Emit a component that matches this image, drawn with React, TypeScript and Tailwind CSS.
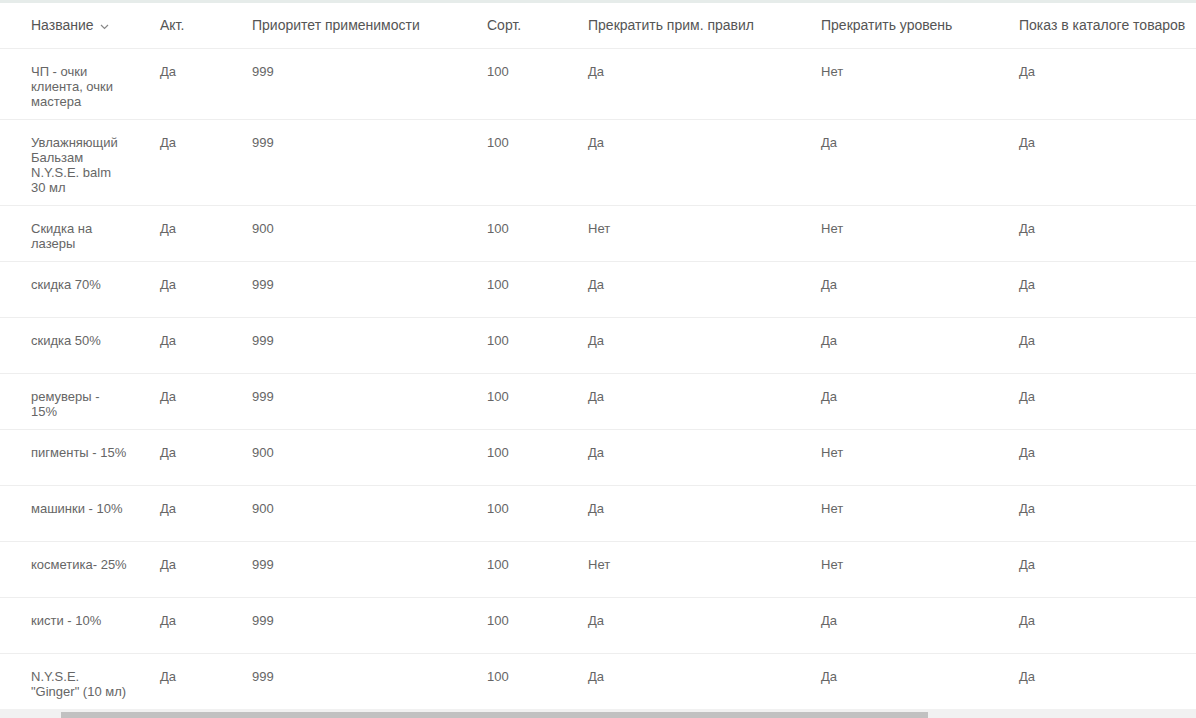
import React from "react";

type Row = { name: string[]; act: string; prio: string; sort: string; stopRule: string; stopLevel: string; catalog: string };

const rows: Row[] = [
  { name: ["ЧП - очки", "клиента, очки", "мастера"], act: "Да", prio: "999", sort: "100", stopRule: "Да", stopLevel: "Нет", catalog: "Да" },
  { name: ["Увлажняющий", "Бальзам", "N.Y.S.E. balm", "30 мл"], act: "Да", prio: "999", sort: "100", stopRule: "Да", stopLevel: "Да", catalog: "Да" },
  { name: ["Скидка на", "лазеры"], act: "Да", prio: "900", sort: "100", stopRule: "Нет", stopLevel: "Нет", catalog: "Да" },
  { name: ["скидка 70%"], act: "Да", prio: "999", sort: "100", stopRule: "Да", stopLevel: "Да", catalog: "Да" },
  { name: ["скидка 50%"], act: "Да", prio: "999", sort: "100", stopRule: "Да", stopLevel: "Да", catalog: "Да" },
  { name: ["ремуверы -", "15%"], act: "Да", prio: "999", sort: "100", stopRule: "Да", stopLevel: "Да", catalog: "Да" },
  { name: ["пигменты - 15%"], act: "Да", prio: "900", sort: "100", stopRule: "Да", stopLevel: "Нет", catalog: "Да" },
  { name: ["машинки - 10%"], act: "Да", prio: "900", sort: "100", stopRule: "Да", stopLevel: "Нет", catalog: "Да" },
  { name: ["косметика- 25%"], act: "Да", prio: "999", sort: "100", stopRule: "Нет", stopLevel: "Нет", catalog: "Да" },
  { name: ["кисти - 10%"], act: "Да", prio: "999", sort: "100", stopRule: "Да", stopLevel: "Да", catalog: "Да" },
  { name: ["N.Y.S.E.", "\"Ginger\" (10 мл)"], act: "Да", prio: "999", sort: "100", stopRule: "Да", stopLevel: "Да", catalog: "Да" },
];

const W = ["w-[144px] pl-[31px] pr-4", "w-[92px] px-4", "w-[235px] px-4", "w-[101px] px-4", "w-[233px] px-4", "w-[198px] px-4", "w-[260px] px-4"];

export default function App() {
  return (
    <div
      className="w-[1196px] h-[718px] bg-white overflow-hidden flex flex-col"
      style={{ fontFamily: '"Liberation Sans", Arial, sans-serif' }}
    >
      <div className="h-[3px] bg-[#e6ecea] shrink-0" />
      <div className="flex-1 overflow-hidden">
        <div className="w-[1300px]">
          <div className="flex h-[46px] items-center border-b border-[#eeeeee] text-[14px] text-[#555555]">
            <div className={`${W[0]} flex items-center gap-[6px] shrink-0`}>
              <span>Название</span>
              <svg width="9" height="6" viewBox="0 0 9 6" className="mt-[2px]">
                <path d="M1 1 L4.5 4.5 L8 1" fill="none" stroke="#888" strokeWidth="1.2" />
              </svg>
            </div>
            <div className={`${W[1]} shrink-0`}>Акт.</div>
            <div className={`${W[2]} shrink-0`}>Приоритет применимости</div>
            <div className={`${W[3]} shrink-0`}>Сорт.</div>
            <div className={`${W[4]} shrink-0`}>Прекратить прим. правил</div>
            <div className={`${W[5]} shrink-0`}>Прекратить уровень</div>
            <div className={`${W[6]} shrink-0 whitespace-nowrap`}>Показ в каталоге товаров</div>
          </div>
          {rows.map((r, i) => (
            <div
              key={i}
              className="flex min-h-[56px] border-b border-[#eeeeee] text-[13px] leading-[15px] text-[#666666]"
            >
              <div className={`${W[0]} pt-[15px] pb-[10px] shrink-0`}>
                {r.name.map((l, j) => (
                  <div key={j} className="whitespace-nowrap">{l}</div>
                ))}
              </div>
              <div className={`${W[1]} pt-[15px] shrink-0`}>{r.act}</div>
              <div className={`${W[2]} pt-[15px] shrink-0`}>{r.prio}</div>
              <div className={`${W[3]} pt-[15px] shrink-0`}>{r.sort}</div>
              <div className={`${W[4]} pt-[15px] shrink-0`}>{r.stopRule}</div>
              <div className={`${W[5]} pt-[15px] shrink-0`}>{r.stopLevel}</div>
              <div className={`${W[6]} pt-[15px] shrink-0`}>{r.catalog}</div>
            </div>
          ))}
        </div>
      </div>
      <div className="h-[9px] bg-[#f1f1f1] shrink-0 flex items-end">
        <div className="ml-[61px] w-[867px] h-[6px] bg-[#c1c1c1]" />
      </div>
    </div>
  );
}
